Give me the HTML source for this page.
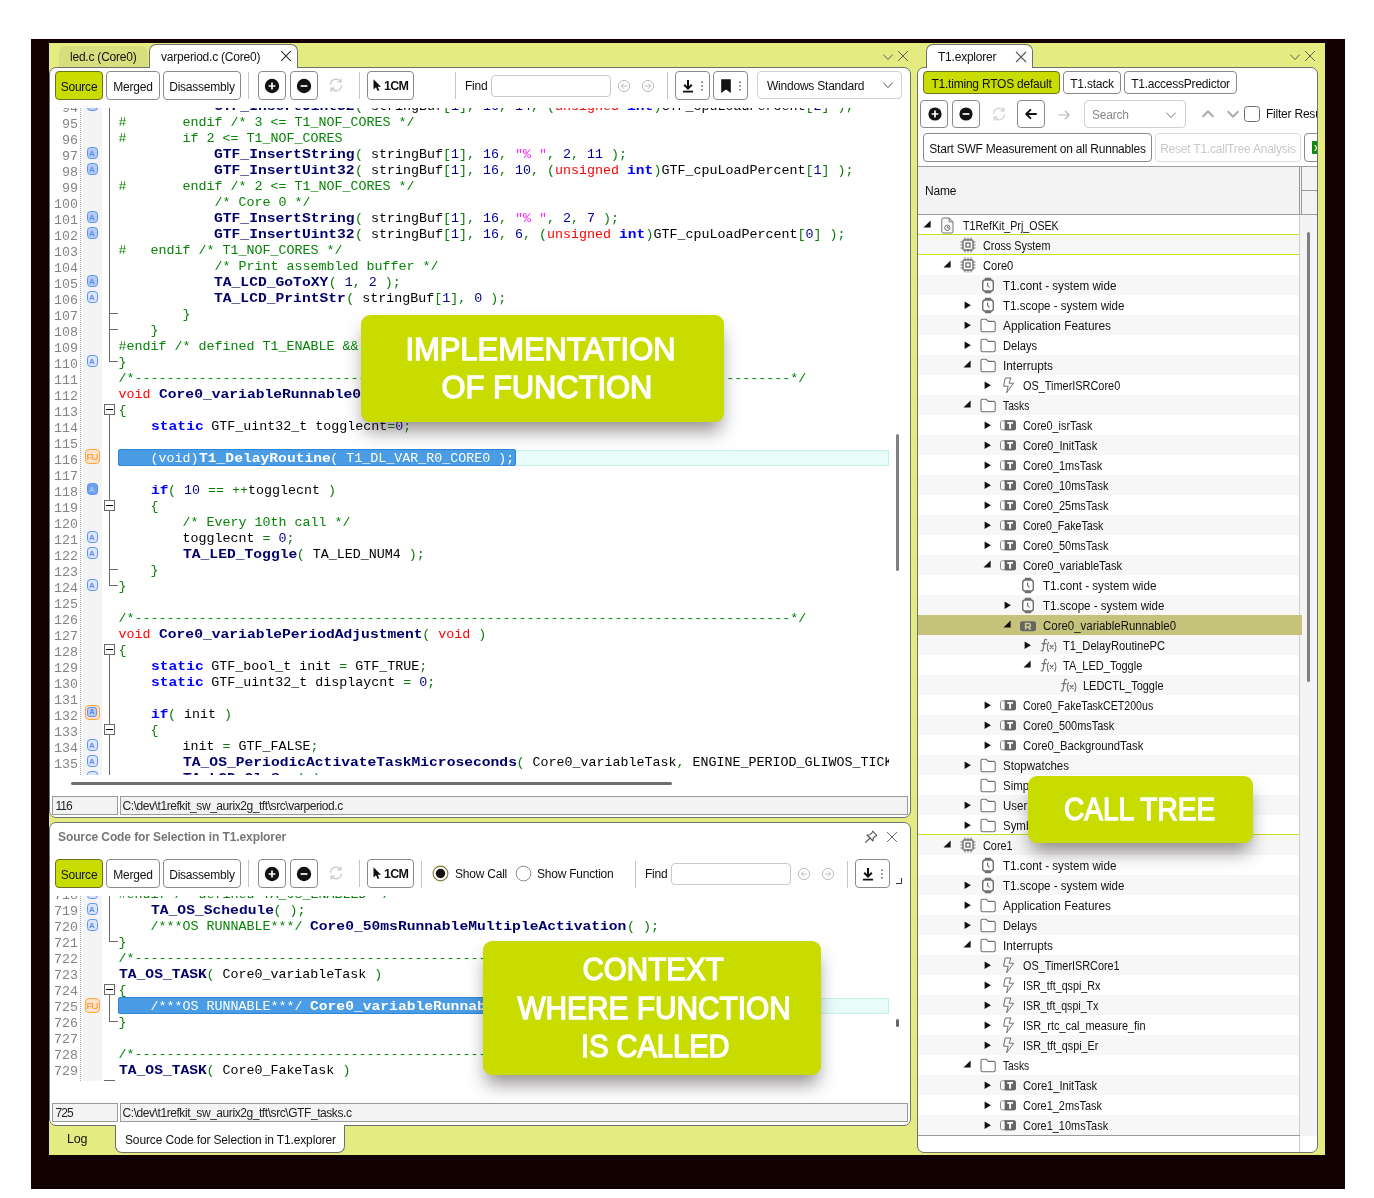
<!DOCTYPE html>
<html><head><meta charset="utf-8"><title>T1</title><style>
*{box-sizing:border-box;margin:0;padding:0}
html,body{width:1374px;height:1198px;background:#fff;overflow:hidden}
body{position:relative;font-family:"Liberation Sans",sans-serif;font-size:12px;color:#111;letter-spacing:-0.22px}
.abs{position:absolute}
#root{position:absolute;left:0;top:0;width:1374px;height:1198px;will-change:transform}
#frame{position:absolute;left:31px;top:39px;width:1314px;height:1150px;background:#130101}
#app{position:absolute;left:49px;top:43px;width:1276px;height:1112px;background:#e4eb80}
.panel{position:absolute;background:#fff;border:1px solid #707070;border-radius:7px;overflow:hidden}
.tab{position:absolute;white-space:nowrap;line-height:22px}
.tab.act{background:#fff;border:1px solid #707070;border-bottom:none;border-radius:7px 7px 0 0}
.tab.in{background:#d7de7e;border-radius:7px 7px 0 0}
.btn{position:absolute;border:1px solid #8a8a8a;border-radius:4px;background:#fff;white-space:nowrap;text-align:center;overflow:hidden;padding-top:2px}
.btn.on{background:#c8dc00;border-color:#6d7420}
.btn.dis{border-color:#dcdcdc;color:#c9c9c9}
.sep{position:absolute;width:1px;background:#c4c4c4}
.inp{position:absolute;border:1px solid #c9c9c9;border-radius:4px;background:#fff}
.lbl{position:absolute;white-space:nowrap}
.code{position:absolute;overflow:hidden;background:#fff;font-family:"Liberation Mono",monospace;font-size:13.333px;letter-spacing:0;line-height:16px}
.ln{position:absolute;left:0;width:28px;text-align:right;color:#848484;height:16px;white-space:pre;margin-top:2.5px}
.cl{position:absolute;left:68.5px;height:16px;white-space:pre;color:#000;margin-top:1px}
.b{display:inline-block;font-weight:bold;height:16px;vertical-align:top}
.b>span{display:inline-block;transform:scaleX(1.0987);transform-origin:0 50%}
.c{color:#068306}.o{color:#0a7a0a}.s{color:#ff20ff}.n{color:#000090}.k{color:#0000ff}.r{color:#ff0000}.f{color:#00006a}.i{color:#000}
.cl.sel,.cl.sel span{color:#fff}
.selbg{position:absolute;background:#4a9de4;border:1px solid #2e86d8;border-radius:2px}
.caret{position:absolute;background:#e8fdfa;border:1px solid #c4f1e6}
.mk{position:absolute;margin-top:-1px}
.st{position:absolute;border:1px solid #9a9a9a;background:#f3f3f3;font-size:12px;letter-spacing:-0.43px;line-height:19px;padding-left:1.5px;white-space:nowrap;overflow:hidden;color:#222}
.row{position:absolute;left:0;width:384px;height:20px}
.row.g{background:#f7f7f7}
.row.rsel{background:#c5c27c}
.row .t{position:absolute;top:0.5px;line-height:20px;white-space:nowrap;letter-spacing:0;transform-origin:0 50%}
.co{position:absolute;background:#c8dc00;border-radius:9px;color:#fff;text-align:center;font-size:31px;letter-spacing:0;box-shadow:0 12px 18px -3px rgba(50,40,40,0.5);white-space:nowrap;-webkit-text-stroke:1.3px #fff}
</style></head><body>
<div id="root"><div id="frame"></div><div id="app"></div>
<div class="tab in" style="left:59px;top:46px;width:89px;height:22px;"><span style="position:absolute;left:11px;top:0">led.c (Core0)</span></div>
<div class="panel" style="left:49px;top:67px;width:862px;height:751px;"></div>
<div class="tab act" style="left:149px;top:44px;width:149px;height:24px;"><span style="position:absolute;left:11px;top:1px">varperiod.c (Core0)</span></div>
<svg class="abs" style="left:278px;top:48px;" width="16" height="16" viewBox="0 0 16 16"><path d="M3.2 3.2L12.8 12.8M12.8 3.2L3.2 12.8" stroke="#2a2a2a" stroke-width="1.1" fill="none"/></svg>
<svg class="abs" style="left:879.5px;top:48.5px;" width="16" height="16" viewBox="0 0 16 16"><path d="M3.7 5.9L8 10.6L12.3 5.9" stroke="#5e5e5e" stroke-width="1.0" fill="none" stroke-linecap="round" stroke-linejoin="round"/></svg>
<svg class="abs" style="left:895px;top:47.8px;" width="16" height="16" viewBox="0 0 16 16"><path d="M3 3L13 13M13 3L3 13" stroke="#5e5e5e" stroke-width="1.0" fill="none"/></svg>
<div class="btn on" style="left:55px;top:71px;width:48px;height:29px;line-height:27px">Source</div>
<div class="btn" style="left:106px;top:71px;width:54px;height:29px;line-height:27px">Merged</div>
<div class="btn" style="left:163px;top:71px;width:78px;height:29px;line-height:27px">Disassembly</div>
<div class="sep" style="left:248px;top:72px;width:1px;height:27px;"></div>
<div class="btn" style="left:258px;top:71px;width:28px;height:29px;"></div>
<svg class="abs" style="left:264px;top:77.5px;" width="16" height="16" viewBox="0 0 16 16"><circle cx="8" cy="8" r="7.2" fill="#111"/><path d="M4.6 8H11.4M8 4.6V11.4" stroke="#fff" stroke-width="1.7" fill="none"/></svg>
<div class="btn" style="left:290px;top:71px;width:28px;height:29px;"></div>
<svg class="abs" style="left:296px;top:77.5px;" width="16" height="16" viewBox="0 0 16 16"><circle cx="8" cy="8" r="7.2" fill="#111"/><path d="M4.6 8H11.4" stroke="#fff" stroke-width="1.7" fill="none"/></svg>
<svg class="abs" style="left:328px;top:77.0px;" width="16" height="16" viewBox="0 0 16 16"><g fill="none" stroke="#c6c6c6" stroke-width="1.2" stroke-linecap="round" stroke-linejoin="round"><path d="M2.6 7.2A5.5 5.5 0 0 1 12.6 4.6"/><path d="M13.4 8.8A5.5 5.5 0 0 1 3.4 11.4"/><path d="M12.9 1.8V4.8H9.9"/><path d="M3.1 14.2V11.2H6.1"/></g></svg>
<div class="sep" style="left:359px;top:72px;width:1px;height:27px;"></div>
<div class="btn" style="left:367px;top:71px;width:47px;height:29px;"></div>
<svg class="abs" style="left:373px;top:78.5px;" width="9" height="13" viewBox="0 0 9 13"><path d="M0.5 0.3V10.6L3 8.3L4.7 12L6.3 11.3L4.7 7.7H8Z" fill="#111"/></svg>
<div class="lbl" style="left:384px;top:78px;line-height:16px;font-weight:bold;font-size:12.5px;letter-spacing:-0.8px">1CM</div>
<div class="sep" style="left:455px;top:72px;width:1px;height:27px;"></div>
<div class="lbl" style="left:465px;top:78px;line-height:16px;">Find</div>
<div class="inp" style="left:491px;top:75px;width:120px;height:22px;"></div>
<svg class="abs" style="left:616px;top:77.5px;" width="16" height="16" viewBox="0 0 16 16"><circle cx="8" cy="8" r="5.6" fill="none" stroke="#bdbdbd" stroke-width="1"/><path d="M10.8 8H5.4M7.6 5.6L5.2 8L7.6 10.4" fill="none" stroke="#bdbdbd" stroke-width="1" stroke-linecap="round" stroke-linejoin="round"/></svg>
<svg class="abs" style="left:640px;top:77.5px;" width="16" height="16" viewBox="0 0 16 16"><circle cx="8" cy="8" r="5.6" fill="none" stroke="#bdbdbd" stroke-width="1"/><path d="M5.2 8H10.6M8.4 5.6L10.8 8L8.4 10.4" fill="none" stroke="#bdbdbd" stroke-width="1" stroke-linecap="round" stroke-linejoin="round"/></svg>
<div class="sep" style="left:667px;top:72px;width:1px;height:27px;"></div>
<div class="btn" style="left:675px;top:71px;width:35px;height:29px;"></div>
<svg class="abs" style="left:680px;top:77.5px;" width="16" height="16" viewBox="0 0 16 16"><path d="M8 2V10.2M4.2 6.8L8 10.6L11.8 6.8" fill="none" stroke="#111" stroke-width="2"/><path d="M3 13.6H13" stroke="#111" stroke-width="1.8"/></svg>
<svg class="abs" style="left:699.5px;top:77.5px;" width="4" height="16" viewBox="0 0 4 16"><circle cx="2" cy="4.2" r="0.75" fill="#222"/><circle cx="2" cy="8" r="0.75" fill="#222"/><circle cx="2" cy="11.8" r="0.75" fill="#222"/></svg>
<div class="btn" style="left:713px;top:71px;width:35px;height:29px;"></div>
<svg class="abs" style="left:718px;top:77.5px;" width="16" height="16" viewBox="0 0 16 16"><path d="M3.2 1.2H12.8V15L8 11.6L3.2 15Z" fill="#111"/></svg>
<svg class="abs" style="left:737.5px;top:77.5px;" width="4" height="16" viewBox="0 0 4 16"><circle cx="2" cy="4.2" r="0.75" fill="#222"/><circle cx="2" cy="8" r="0.75" fill="#222"/><circle cx="2" cy="11.8" r="0.75" fill="#222"/></svg>
<div class="btn" style="left:757px;top:71px;width:145px;height:28px;border-color:#d0d0d0"><span style="position:absolute;left:9px;top:1px;line-height:26px">Windows Standard</span></div>
<svg class="abs" style="left:879.5px;top:77px;" width="16" height="16" viewBox="0 0 16 16"><path d="M3.7 5.9L8 10.6L12.3 5.9" stroke="#555" stroke-width="1.0" fill="none" stroke-linecap="round" stroke-linejoin="round"/></svg>
<div class="code" style="left:50px;top:108px;width:839px;height:667px"><div class="abs" style="left:33px;top:0;width:19px;height:667px;background:#f4f4f4"></div><div class="abs" style="left:30px;top:0;width:1px;height:667px;background:repeating-linear-gradient(to bottom,#a8a8a8 0 1px,#fff 1px 2px)"></div><div class="ln" style="top:-10px">94</div><div class="mk" style="left:37px;top:-8px;width:11px;height:12px;border:1.5px solid #5f92f0;border-radius:3.5px;background:#b3cbf3"><div style="position:absolute;left:0;top:0.8px;width:8px;height:9px;font:bold 8px/9.5px 'Liberation Sans',sans-serif;letter-spacing:0;color:#5b90ec;text-align:center">A</div></div><div class="abs" style="left:59px;top:-10px;width:1px;height:16px;background:#6a6a6a"></div><div class="cl" style="top:-10px">            <span class="b f" style="width:140.64px"><span>GTF_InsertUint32</span></span><span class="o">(</span> <span class="i">stringBuf</span><span class="o">[</span><span class="n">1</span><span class="o">],</span> <span class="n">16</span><span class="o">,</span> <span class="n">14</span><span class="o">,</span> <span class="o">(</span><span class="r">unsigned</span> <span class="b k" style="width:26.37px"><span>int</span></span><span class="o">)</span><span class="i">GTF_cpuLoadPercent</span><span class="o">[</span><span class="n">2</span><span class="o">]</span> <span class="o">);</span></div><div class="ln" style="top:6px">95</div><div class="abs" style="left:59px;top:6px;width:1px;height:16px;background:#6a6a6a"></div><div class="cl" style="top:6px"><span class="c">#       endif /* 3 &lt;= T1_NOF_CORES */</span></div><div class="ln" style="top:22px">96</div><div class="abs" style="left:59px;top:22px;width:1px;height:16px;background:#6a6a6a"></div><div class="cl" style="top:22px"><span class="c">#       if 2 &lt;= T1_NOF_CORES</span></div><div class="ln" style="top:38px">97</div><div class="mk" style="left:37px;top:40px;width:11px;height:12px;border:1.5px solid #5f92f0;border-radius:3.5px;background:#b3cbf3"><div style="position:absolute;left:0;top:0.8px;width:8px;height:9px;font:bold 8px/9.5px 'Liberation Sans',sans-serif;letter-spacing:0;color:#5b90ec;text-align:center">A</div></div><div class="abs" style="left:59px;top:38px;width:1px;height:16px;background:#6a6a6a"></div><div class="cl" style="top:38px">            <span class="b f" style="width:140.64px"><span>GTF_InsertString</span></span><span class="o">(</span> <span class="i">stringBuf</span><span class="o">[</span><span class="n">1</span><span class="o">],</span> <span class="n">16</span><span class="o">,</span> <span class="s">"% "</span><span class="o">,</span> <span class="n">2</span><span class="o">,</span> <span class="n">11</span> <span class="o">);</span></div><div class="ln" style="top:54px">98</div><div class="mk" style="left:37px;top:56px;width:11px;height:12px;border:1.5px solid #5f92f0;border-radius:3.5px;background:#b3cbf3"><div style="position:absolute;left:0;top:0.8px;width:8px;height:9px;font:bold 8px/9.5px 'Liberation Sans',sans-serif;letter-spacing:0;color:#5b90ec;text-align:center">A</div></div><div class="abs" style="left:59px;top:54px;width:1px;height:16px;background:#6a6a6a"></div><div class="cl" style="top:54px">            <span class="b f" style="width:140.64px"><span>GTF_InsertUint32</span></span><span class="o">(</span> <span class="i">stringBuf</span><span class="o">[</span><span class="n">1</span><span class="o">],</span> <span class="n">16</span><span class="o">,</span> <span class="n">10</span><span class="o">,</span> <span class="o">(</span><span class="r">unsigned</span> <span class="b k" style="width:26.37px"><span>int</span></span><span class="o">)</span><span class="i">GTF_cpuLoadPercent</span><span class="o">[</span><span class="n">1</span><span class="o">]</span> <span class="o">);</span></div><div class="ln" style="top:70px">99</div><div class="abs" style="left:59px;top:70px;width:1px;height:16px;background:#6a6a6a"></div><div class="cl" style="top:70px"><span class="c">#       endif /* 2 &lt;= T1_NOF_CORES */</span></div><div class="ln" style="top:86px">100</div><div class="abs" style="left:59px;top:86px;width:1px;height:16px;background:#6a6a6a"></div><div class="cl" style="top:86px">            <span class="c">/* Core 0 */</span></div><div class="ln" style="top:102px">101</div><div class="mk" style="left:37px;top:104px;width:11px;height:12px;border:1.5px solid #5f92f0;border-radius:3.5px;background:#b3cbf3"><div style="position:absolute;left:0;top:0.8px;width:8px;height:9px;font:bold 8px/9.5px 'Liberation Sans',sans-serif;letter-spacing:0;color:#5b90ec;text-align:center">A</div></div><div class="abs" style="left:59px;top:102px;width:1px;height:16px;background:#6a6a6a"></div><div class="cl" style="top:102px">            <span class="b f" style="width:140.64px"><span>GTF_InsertString</span></span><span class="o">(</span> <span class="i">stringBuf</span><span class="o">[</span><span class="n">1</span><span class="o">],</span> <span class="n">16</span><span class="o">,</span> <span class="s">"% "</span><span class="o">,</span> <span class="n">2</span><span class="o">,</span> <span class="n">7</span> <span class="o">);</span></div><div class="ln" style="top:118px">102</div><div class="mk" style="left:37px;top:120px;width:11px;height:12px;border:1.5px solid #5f92f0;border-radius:3.5px;background:#b3cbf3"><div style="position:absolute;left:0;top:0.8px;width:8px;height:9px;font:bold 8px/9.5px 'Liberation Sans',sans-serif;letter-spacing:0;color:#5b90ec;text-align:center">A</div></div><div class="abs" style="left:59px;top:118px;width:1px;height:16px;background:#6a6a6a"></div><div class="cl" style="top:118px">            <span class="b f" style="width:140.64px"><span>GTF_InsertUint32</span></span><span class="o">(</span> <span class="i">stringBuf</span><span class="o">[</span><span class="n">1</span><span class="o">],</span> <span class="n">16</span><span class="o">,</span> <span class="n">6</span><span class="o">,</span> <span class="o">(</span><span class="r">unsigned</span> <span class="b k" style="width:26.37px"><span>int</span></span><span class="o">)</span><span class="i">GTF_cpuLoadPercent</span><span class="o">[</span><span class="n">0</span><span class="o">]</span> <span class="o">);</span></div><div class="ln" style="top:134px">103</div><div class="abs" style="left:59px;top:134px;width:1px;height:16px;background:#6a6a6a"></div><div class="cl" style="top:134px"><span class="c">#   endif /* T1_NOF_CORES */</span></div><div class="ln" style="top:150px">104</div><div class="abs" style="left:59px;top:150px;width:1px;height:16px;background:#6a6a6a"></div><div class="cl" style="top:150px">            <span class="c">/* Print assembled buffer */</span></div><div class="ln" style="top:166px">105</div><div class="mk" style="left:37px;top:168px;width:11px;height:12px;border:1.5px solid #5f92f0;border-radius:3.5px;background:#b3cbf3"><div style="position:absolute;left:0;top:0.8px;width:8px;height:9px;font:bold 8px/9.5px 'Liberation Sans',sans-serif;letter-spacing:0;color:#5b90ec;text-align:center">A</div></div><div class="abs" style="left:59px;top:166px;width:1px;height:16px;background:#6a6a6a"></div><div class="cl" style="top:166px">            <span class="b f" style="width:114.27px"><span>TA_LCD_GoToXY</span></span><span class="o">(</span> <span class="n">1</span><span class="o">,</span> <span class="n">2</span> <span class="o">);</span></div><div class="ln" style="top:182px">106</div><div class="mk" style="left:37px;top:184px;width:11px;height:12px;border:1.5px solid #5f92f0;border-radius:3.5px;background:#dae5fa"><div style="position:absolute;left:0;top:0.8px;width:8px;height:9px;font:bold 8px/9.5px 'Liberation Sans',sans-serif;letter-spacing:0;color:#5b90ec;text-align:center">A</div></div><div class="abs" style="left:59px;top:182px;width:1px;height:16px;background:#6a6a6a"></div><div class="cl" style="top:182px">            <span class="b f" style="width:131.85px"><span>TA_LCD_PrintStr</span></span><span class="o">(</span> <span class="i">stringBuf</span><span class="o">[</span><span class="n">1</span><span class="o">],</span> <span class="n">0</span> <span class="o">);</span></div><div class="ln" style="top:198px">107</div><div class="abs" style="left:59px;top:198px;width:1px;height:16px;background:#6a6a6a"></div><div class="abs" style="left:59px;top:205px;width:9px;height:1px;background:#6a6a6a"></div><div class="cl" style="top:198px">        <span class="o">}</span></div><div class="ln" style="top:214px">108</div><div class="abs" style="left:59px;top:214px;width:1px;height:16px;background:#6a6a6a"></div><div class="abs" style="left:59px;top:221px;width:9px;height:1px;background:#6a6a6a"></div><div class="cl" style="top:214px">    <span class="o">}</span></div><div class="ln" style="top:230px">109</div><div class="abs" style="left:59px;top:230px;width:1px;height:16px;background:#6a6a6a"></div><div class="cl" style="top:230px"><span class="c">#endif /* defined T1_ENABLE &amp;&amp; !defined T1_DISABLE_T1_CONT */</span></div><div class="ln" style="top:246px">110</div><div class="mk" style="left:37px;top:248px;width:11px;height:12px;border:1.5px solid #5f92f0;border-radius:3.5px;background:#dae5fa"><div style="position:absolute;left:0;top:0.8px;width:8px;height:9px;font:bold 8px/9.5px 'Liberation Sans',sans-serif;letter-spacing:0;color:#5b90ec;text-align:center">A</div></div><div class="abs" style="left:59px;top:246px;width:1px;height:8px;background:#6a6a6a"></div><div class="abs" style="left:59px;top:253px;width:9px;height:1px;background:#6a6a6a"></div><div class="cl" style="top:246px"><span class="o">}</span></div><div class="ln" style="top:262px">111</div><div class="cl" style="top:262px"><span class="c">/*----------------------------------------------------------------------------------*/</span></div><div class="ln" style="top:278px">112</div><div class="cl" style="top:278px"><span class="r">void</span> <span class="b f" style="width:202.17px"><span>Core0_variableRunnable0</span></span><span class="o">(</span> <span class="r">void</span> <span class="o">)</span></div><div class="ln" style="top:294px">113</div><div class="abs" style="left:59px;top:307px;width:1px;height:3px;background:#6a6a6a"></div><div class="abs" style="left:54px;top:296px;width:11px;height:11px;border:1px solid #6a6a6a;background:#fff"><div class="abs" style="left:1px;top:3.75px;width:7px;height:1.5px;background:#000"></div></div><div class="cl" style="top:294px"><span class="o">{</span></div><div class="ln" style="top:310px">114</div><div class="abs" style="left:59px;top:310px;width:1px;height:16px;background:#6a6a6a"></div><div class="cl" style="top:310px">    <span class="b k" style="width:52.74px"><span>static</span></span> <span class="i">GTF_uint32_t</span> <span class="i">togglecnt</span><span class="o">=</span><span class="n">0</span><span class="o">;</span></div><div class="ln" style="top:326px">115</div><div class="abs" style="left:59px;top:326px;width:1px;height:16px;background:#6a6a6a"></div><div class="cl" style="top:326px"></div><div class="ln" style="top:342px">116</div><div class="mk" style="left:35px;top:342px;width:15px;height:15px;border:1.4px solid #ffa53c;border-radius:4px;background:#fbe3cb"><div style="position:absolute;left:-1px;top:1.2px;width:14px;height:12px;font:9.5px/12.5px 'Liberation Sans',sans-serif;letter-spacing:-0.9px;color:#ff8c1a;text-align:center">FU</div></div><div class="abs" style="left:59px;top:342px;width:1px;height:16px;background:#6a6a6a"></div><div class="caret" style="left:68px;top:342px;width:771px;height:16px"></div><div class="selbg" style="left:68px;top:341px;width:397.9px;height:17px"></div><div class="cl sel" style="top:342px">    <span class="o">(</span><span class="r">void</span><span class="o">)</span><span class="b f" style="width:131.85px"><span>T1_DelayRoutine</span></span><span class="o">(</span> <span class="i">T1_DL_VAR_R0_CORE0</span> <span class="o">);</span></div><div class="ln" style="top:358px">117</div><div class="abs" style="left:59px;top:358px;width:1px;height:16px;background:#6a6a6a"></div><div class="cl" style="top:358px"></div><div class="ln" style="top:374px">118</div><div class="mk" style="left:37px;top:376px;width:11px;height:12px;border:1.5px solid #5f92f0;border-radius:3.5px;background:#6f9ff0"><div style="position:absolute;left:0;top:0.8px;width:8px;height:9px;font:bold 8px/9.5px 'Liberation Sans',sans-serif;letter-spacing:0;color:#a9c5f6;text-align:center">A</div></div><div class="abs" style="left:59px;top:374px;width:1px;height:16px;background:#6a6a6a"></div><div class="cl" style="top:374px">    <span class="b k" style="width:17.58px"><span>if</span></span><span class="o">(</span> <span class="n">10</span> <span class="o">==</span> <span class="o">++</span><span class="i">togglecnt</span> <span class="o">)</span></div><div class="ln" style="top:390px">119</div><div class="abs" style="left:59px;top:390px;width:1px;height:2px;background:#6a6a6a"></div><div class="abs" style="left:59px;top:403px;width:1px;height:3px;background:#6a6a6a"></div><div class="abs" style="left:54px;top:392px;width:11px;height:11px;border:1px solid #6a6a6a;background:#fff"><div class="abs" style="left:1px;top:3.75px;width:7px;height:1.5px;background:#000"></div></div><div class="cl" style="top:390px">    <span class="o">{</span></div><div class="ln" style="top:406px">120</div><div class="abs" style="left:59px;top:406px;width:1px;height:16px;background:#6a6a6a"></div><div class="cl" style="top:406px">        <span class="c">/* Every 10th call */</span></div><div class="ln" style="top:422px">121</div><div class="mk" style="left:37px;top:424px;width:11px;height:12px;border:1.5px solid #5f92f0;border-radius:3.5px;background:#dae5fa"><div style="position:absolute;left:0;top:0.8px;width:8px;height:9px;font:bold 8px/9.5px 'Liberation Sans',sans-serif;letter-spacing:0;color:#5b90ec;text-align:center">A</div></div><div class="abs" style="left:59px;top:422px;width:1px;height:16px;background:#6a6a6a"></div><div class="cl" style="top:422px">        <span class="i">togglecnt</span> <span class="o">=</span> <span class="n">0</span><span class="o">;</span></div><div class="ln" style="top:438px">122</div><div class="mk" style="left:37px;top:440px;width:11px;height:12px;border:1.5px solid #5f92f0;border-radius:3.5px;background:#dae5fa"><div style="position:absolute;left:0;top:0.8px;width:8px;height:9px;font:bold 8px/9.5px 'Liberation Sans',sans-serif;letter-spacing:0;color:#5b90ec;text-align:center">A</div></div><div class="abs" style="left:59px;top:438px;width:1px;height:16px;background:#6a6a6a"></div><div class="cl" style="top:438px">        <span class="b f" style="width:114.27px"><span>TA_LED_Toggle</span></span><span class="o">(</span> <span class="i">TA_LED_NUM4</span> <span class="o">);</span></div><div class="ln" style="top:454px">123</div><div class="abs" style="left:59px;top:454px;width:1px;height:16px;background:#6a6a6a"></div><div class="abs" style="left:59px;top:461px;width:9px;height:1px;background:#6a6a6a"></div><div class="cl" style="top:454px">    <span class="o">}</span></div><div class="ln" style="top:470px">124</div><div class="mk" style="left:37px;top:472px;width:11px;height:12px;border:1.5px solid #5f92f0;border-radius:3.5px;background:#dae5fa"><div style="position:absolute;left:0;top:0.8px;width:8px;height:9px;font:bold 8px/9.5px 'Liberation Sans',sans-serif;letter-spacing:0;color:#5b90ec;text-align:center">A</div></div><div class="abs" style="left:59px;top:470px;width:1px;height:8px;background:#6a6a6a"></div><div class="abs" style="left:59px;top:477px;width:9px;height:1px;background:#6a6a6a"></div><div class="cl" style="top:470px"><span class="o">}</span></div><div class="ln" style="top:486px">125</div><div class="cl" style="top:486px"></div><div class="ln" style="top:502px">126</div><div class="cl" style="top:502px"><span class="c">/*----------------------------------------------------------------------------------*/</span></div><div class="ln" style="top:518px">127</div><div class="cl" style="top:518px"><span class="r">void</span> <span class="b f" style="width:263.70px"><span>Core0_variablePeriodAdjustment</span></span><span class="o">(</span> <span class="r">void</span> <span class="o">)</span></div><div class="ln" style="top:534px">128</div><div class="abs" style="left:59px;top:547px;width:1px;height:3px;background:#6a6a6a"></div><div class="abs" style="left:54px;top:536px;width:11px;height:11px;border:1px solid #6a6a6a;background:#fff"><div class="abs" style="left:1px;top:3.75px;width:7px;height:1.5px;background:#000"></div></div><div class="cl" style="top:534px"><span class="o">{</span></div><div class="ln" style="top:550px">129</div><div class="abs" style="left:59px;top:550px;width:1px;height:16px;background:#6a6a6a"></div><div class="cl" style="top:550px">    <span class="b k" style="width:52.74px"><span>static</span></span> <span class="i">GTF_bool_t</span> <span class="i">init</span> <span class="o">=</span> <span class="i">GTF_TRUE</span><span class="o">;</span></div><div class="ln" style="top:566px">130</div><div class="abs" style="left:59px;top:566px;width:1px;height:16px;background:#6a6a6a"></div><div class="cl" style="top:566px">    <span class="b k" style="width:52.74px"><span>static</span></span> <span class="i">GTF_uint32_t</span> <span class="i">displaycnt</span> <span class="o">=</span> <span class="n">0</span><span class="o">;</span></div><div class="ln" style="top:582px">131</div><div class="abs" style="left:59px;top:582px;width:1px;height:16px;background:#6a6a6a"></div><div class="cl" style="top:582px"></div><div class="ln" style="top:598px">132</div><div class="mk" style="left:35px;top:598px;width:15px;height:15px;border:1.4px solid #ffa53c;border-radius:4px;background:#fbe3cb"><div style="position:absolute;left:1px;top:1.2px;width:10px;height:10px;border:1.2px solid #6a96e8;border-radius:2.5px;background:#b4c8ee;font:bold 7px/8px 'Liberation Sans',sans-serif;letter-spacing:0;color:#5a88e0;text-align:center">A</div></div><div class="abs" style="left:59px;top:598px;width:1px;height:16px;background:#6a6a6a"></div><div class="cl" style="top:598px">    <span class="b k" style="width:17.58px"><span>if</span></span><span class="o">(</span> <span class="i">init</span> <span class="o">)</span></div><div class="ln" style="top:614px">133</div><div class="abs" style="left:59px;top:614px;width:1px;height:2px;background:#6a6a6a"></div><div class="abs" style="left:59px;top:627px;width:1px;height:3px;background:#6a6a6a"></div><div class="abs" style="left:54px;top:616px;width:11px;height:11px;border:1px solid #6a6a6a;background:#fff"><div class="abs" style="left:1px;top:3.75px;width:7px;height:1.5px;background:#000"></div></div><div class="cl" style="top:614px">    <span class="o">{</span></div><div class="ln" style="top:630px">134</div><div class="mk" style="left:37px;top:632px;width:11px;height:12px;border:1.5px solid #5f92f0;border-radius:3.5px;background:#dae5fa"><div style="position:absolute;left:0;top:0.8px;width:8px;height:9px;font:bold 8px/9.5px 'Liberation Sans',sans-serif;letter-spacing:0;color:#5b90ec;text-align:center">A</div></div><div class="abs" style="left:59px;top:630px;width:1px;height:16px;background:#6a6a6a"></div><div class="cl" style="top:630px">        <span class="i">init</span> <span class="o">=</span> <span class="i">GTF_FALSE</span><span class="o">;</span></div><div class="ln" style="top:646px">135</div><div class="mk" style="left:37px;top:648px;width:11px;height:12px;border:1.5px solid #5f92f0;border-radius:3.5px;background:#dae5fa"><div style="position:absolute;left:0;top:0.8px;width:8px;height:9px;font:bold 8px/9.5px 'Liberation Sans',sans-serif;letter-spacing:0;color:#5b90ec;text-align:center">A</div></div><div class="abs" style="left:59px;top:646px;width:1px;height:16px;background:#6a6a6a"></div><div class="cl" style="top:646px">        <span class="b f" style="width:334.02px"><span>TA_OS_PeriodicActivateTaskMicroseconds</span></span><span class="o">(</span> <span class="i">Core0_variableTask</span><span class="o">,</span> <span class="i">ENGINE_PERIOD_GLIWOS_TICKS</span> <span class="o">);</span></div><div class="ln" style="top:662px">136</div><div class="mk" style="left:37px;top:664px;width:11px;height:12px;border:1.5px solid #5f92f0;border-radius:3.5px;background:#dae5fa"><div style="position:absolute;left:0;top:0.8px;width:8px;height:9px;font:bold 8px/9.5px 'Liberation Sans',sans-serif;letter-spacing:0;color:#5b90ec;text-align:center">A</div></div><div class="abs" style="left:59px;top:662px;width:1px;height:16px;background:#6a6a6a"></div><div class="cl" style="top:662px">        <span class="b f" style="width:114.27px"><span>TA_LCD_ClrScr</span></span><span class="o">(</span> <span class="o">);</span></div></div>
<div class="abs" style="left:896px;top:434px;width:3px;height:137px;background:#808080;border-radius:1.5px"></div>
<div class="abs" style="left:71px;top:782px;width:601px;height:3px;background:#6e6e6e;border-radius:1.5px"></div>
<div class="st" style="left:52px;top:796px;width:66px;height:19px;letter-spacing:-0.95px;padding-left:2.5px">116</div>
<div class="st" style="left:120px;top:796px;width:788px;height:19px;">C:\dev\t1refkit_sw_aurix2g_tft\src\varperiod.c</div>
<div class="panel" style="left:49px;top:822px;width:862px;height:304px;"></div>
<div class="lbl" style="left:58px;top:829px;line-height:16px;font-weight:bold;color:#767676;font-size:12px;letter-spacing:-0.1px">Source Code for Selection in T1.explorer</div>
<svg class="abs" style="left:862.5px;top:829px;" width="16" height="16" viewBox="0 0 16 16"><g fill="none" stroke="#555" stroke-width="1.1" stroke-linejoin="round" stroke-linecap="round"><path d="M9.6 2.2L13.8 6.4L12.4 6.9L10.3 9L10 12L4 6L7 5.7L9.1 3.6Z"/><path d="M7 9L2.6 13.4"/></g></svg>
<svg class="abs" style="left:884px;top:829px;" width="16" height="16" viewBox="0 0 16 16"><path d="M3 3L13 13M13 3L3 13" stroke="#6a6a6a" stroke-width="1.0" fill="none"/></svg>
<div class="btn on" style="left:55px;top:859px;width:48px;height:29px;line-height:27px">Source</div>
<div class="btn" style="left:106px;top:859px;width:54px;height:29px;line-height:27px">Merged</div>
<div class="btn" style="left:163px;top:859px;width:78px;height:29px;line-height:27px">Disassembly</div>
<div class="sep" style="left:248px;top:860px;width:1px;height:27px;"></div>
<div class="btn" style="left:258px;top:859px;width:28px;height:29px;"></div>
<svg class="abs" style="left:264px;top:865.5px;" width="16" height="16" viewBox="0 0 16 16"><circle cx="8" cy="8" r="7.2" fill="#111"/><path d="M4.6 8H11.4M8 4.6V11.4" stroke="#fff" stroke-width="1.7" fill="none"/></svg>
<div class="btn" style="left:290px;top:859px;width:28px;height:29px;"></div>
<svg class="abs" style="left:296px;top:865.5px;" width="16" height="16" viewBox="0 0 16 16"><circle cx="8" cy="8" r="7.2" fill="#111"/><path d="M4.6 8H11.4" stroke="#fff" stroke-width="1.7" fill="none"/></svg>
<svg class="abs" style="left:328px;top:865.0px;" width="16" height="16" viewBox="0 0 16 16"><g fill="none" stroke="#c6c6c6" stroke-width="1.2" stroke-linecap="round" stroke-linejoin="round"><path d="M2.6 7.2A5.5 5.5 0 0 1 12.6 4.6"/><path d="M13.4 8.8A5.5 5.5 0 0 1 3.4 11.4"/><path d="M12.9 1.8V4.8H9.9"/><path d="M3.1 14.2V11.2H6.1"/></g></svg>
<div class="sep" style="left:359px;top:860px;width:1px;height:27px;"></div>
<div class="btn" style="left:367px;top:859px;width:47px;height:29px;"></div>
<svg class="abs" style="left:373px;top:866.5px;" width="9" height="13" viewBox="0 0 9 13"><path d="M0.5 0.3V10.6L3 8.3L4.7 12L6.3 11.3L4.7 7.7H8Z" fill="#111"/></svg>
<div class="lbl" style="left:384px;top:866px;line-height:16px;font-weight:bold;font-size:12.5px;letter-spacing:-0.8px">1CM</div>
<div class="sep" style="left:421px;top:861px;width:1px;height:27px;"></div>
<svg class="abs" style="left:432px;top:865px;" width="17" height="17" viewBox="0 0 17 17"><circle cx="8.5" cy="8.5" r="7.4" fill="#fff" stroke="#7d7a38" stroke-width="1.1"/><circle cx="8.5" cy="8.5" r="4.7" fill="#111"/></svg>
<div class="lbl" style="left:455px;top:866px;line-height:16px;">Show Call</div>
<svg class="abs" style="left:514.5px;top:865px;" width="17" height="17" viewBox="0 0 17 17"><circle cx="8.5" cy="8.5" r="7.4" fill="#fff" stroke="#8a8a8a" stroke-width="1"/></svg>
<div class="lbl" style="left:537px;top:866px;line-height:16px;">Show Function</div>
<div class="sep" style="left:635px;top:861px;width:1px;height:27px;"></div>
<div class="lbl" style="left:645px;top:866px;line-height:16px;">Find</div>
<div class="inp" style="left:671px;top:863px;width:120px;height:22px;"></div>
<svg class="abs" style="left:796px;top:865.5px;" width="16" height="16" viewBox="0 0 16 16"><circle cx="8" cy="8" r="5.6" fill="none" stroke="#bdbdbd" stroke-width="1"/><path d="M10.8 8H5.4M7.6 5.6L5.2 8L7.6 10.4" fill="none" stroke="#bdbdbd" stroke-width="1" stroke-linecap="round" stroke-linejoin="round"/></svg>
<svg class="abs" style="left:820px;top:865.5px;" width="16" height="16" viewBox="0 0 16 16"><circle cx="8" cy="8" r="5.6" fill="none" stroke="#bdbdbd" stroke-width="1"/><path d="M5.2 8H10.6M8.4 5.6L10.8 8L8.4 10.4" fill="none" stroke="#bdbdbd" stroke-width="1" stroke-linecap="round" stroke-linejoin="round"/></svg>
<div class="sep" style="left:847px;top:861px;width:1px;height:27px;"></div>
<div class="btn" style="left:855px;top:859px;width:35px;height:29px;"></div>
<svg class="abs" style="left:860px;top:865.5px;" width="16" height="16" viewBox="0 0 16 16"><path d="M8 2V10.2M4.2 6.8L8 10.6L11.8 6.8" fill="none" stroke="#111" stroke-width="2"/><path d="M3 13.6H13" stroke="#111" stroke-width="1.8"/></svg>
<svg class="abs" style="left:879.5px;top:865.5px;" width="4" height="16" viewBox="0 0 4 16"><circle cx="2" cy="4.2" r="0.75" fill="#222"/><circle cx="2" cy="8" r="0.75" fill="#222"/><circle cx="2" cy="11.8" r="0.75" fill="#222"/></svg>
<svg class="abs" style="left:895px;top:877px;" width="8" height="8" viewBox="0 0 8 8"><path d="M6.5 1V6.5H1" fill="none" stroke="#333" stroke-width="1"/></svg>
<div class="code" style="left:50px;top:896px;width:839px;height:185px"><div class="abs" style="left:33px;top:0;width:19px;height:185px;background:#f4f4f4"></div><div class="abs" style="left:30px;top:0;width:1px;height:185px;background:repeating-linear-gradient(to bottom,#a8a8a8 0 1px,#fff 1px 2px)"></div><div class="ln" style="top:-11px">718</div><div class="mk" style="left:37px;top:-8px;width:11px;height:12px;border:1.5px solid #5f92f0;border-radius:3.5px;background:#dae5fa"><div style="position:absolute;left:0;top:0.8px;width:8px;height:9px;font:bold 8px/9.5px 'Liberation Sans',sans-serif;letter-spacing:0;color:#5b90ec;text-align:center">A</div></div><div class="abs" style="left:59px;top:-10px;width:1px;height:16px;background:#6a6a6a"></div><div class="cl" style="top:-10px"><span class="c">#endif /* defined TA_OS_ENABLED */</span></div><div class="ln" style="top:5px">719</div><div class="mk" style="left:37px;top:8px;width:11px;height:12px;border:1.5px solid #5f92f0;border-radius:3.5px;background:#dae5fa"><div style="position:absolute;left:0;top:0.8px;width:8px;height:9px;font:bold 8px/9.5px 'Liberation Sans',sans-serif;letter-spacing:0;color:#5b90ec;text-align:center">A</div></div><div class="abs" style="left:59px;top:6px;width:1px;height:16px;background:#6a6a6a"></div><div class="cl" style="top:6px">    <span class="b f" style="width:123.06px"><span>TA_OS_Schedule</span></span><span class="o">(</span> <span class="o">);</span></div><div class="ln" style="top:21px">720</div><div class="mk" style="left:37px;top:24px;width:11px;height:12px;border:1.5px solid #5f92f0;border-radius:3.5px;background:#dae5fa"><div style="position:absolute;left:0;top:0.8px;width:8px;height:9px;font:bold 8px/9.5px 'Liberation Sans',sans-serif;letter-spacing:0;color:#5b90ec;text-align:center">A</div></div><div class="abs" style="left:59px;top:22px;width:1px;height:16px;background:#6a6a6a"></div><div class="cl" style="top:22px">    <span class="c">/***OS RUNNABLE***/</span> <span class="b f" style="width:316.44px"><span>Core0_50msRunnableMultipleActivation</span></span><span class="o">(</span> <span class="o">);</span></div><div class="ln" style="top:37px">721</div><div class="abs" style="left:59px;top:38px;width:1px;height:8px;background:#6a6a6a"></div><div class="abs" style="left:59px;top:45px;width:9px;height:1px;background:#6a6a6a"></div><div class="cl" style="top:38px"><span class="o">}</span></div><div class="ln" style="top:53px">722</div><div class="cl" style="top:54px"><span class="c">/*----------------------------------------------------------------------------------*/</span></div><div class="ln" style="top:69px">723</div><div class="cl" style="top:70px"><span class="b f" style="width:87.90px"><span>TA_OS_TASK</span></span><span class="o">(</span> <span class="i">Core0_variableTask</span> <span class="o">)</span></div><div class="ln" style="top:85px">724</div><div class="abs" style="left:59px;top:99px;width:1px;height:3px;background:#6a6a6a"></div><div class="abs" style="left:54px;top:88px;width:11px;height:11px;border:1px solid #6a6a6a;background:#fff"><div class="abs" style="left:1px;top:3.75px;width:7px;height:1.5px;background:#000"></div></div><div class="cl" style="top:86px"><span class="o">{</span></div><div class="ln" style="top:101px">725</div><div class="mk" style="left:35px;top:103px;width:15px;height:15px;border:1.4px solid #ffa53c;border-radius:4px;background:#fbe3cb"><div style="position:absolute;left:-1px;top:1.2px;width:14px;height:12px;font:9.5px/12.5px 'Liberation Sans',sans-serif;letter-spacing:-0.9px;color:#ff8c1a;text-align:center">FU</div></div><div class="abs" style="left:59px;top:102px;width:1px;height:16px;background:#6a6a6a"></div><div class="caret" style="left:68px;top:102px;width:771px;height:16px"></div><div class="selbg" style="left:68px;top:101px;width:428.2px;height:17px"></div><div class="cl sel" style="top:102px">    <span class="c">/***OS RUNNABLE***/</span> <span class="b f" style="width:202.17px"><span>Core0_variableRunnable0</span></span><span class="o">(</span> <span class="o">);</span></div><div class="ln" style="top:117px">726</div><div class="abs" style="left:59px;top:118px;width:1px;height:8px;background:#6a6a6a"></div><div class="abs" style="left:59px;top:125px;width:9px;height:1px;background:#6a6a6a"></div><div class="cl" style="top:118px"><span class="o">}</span></div><div class="ln" style="top:133px">727</div><div class="cl" style="top:134px"></div><div class="ln" style="top:149px">728</div><div class="cl" style="top:150px"><span class="c">/*----------------------------------------------------------------------------------*/</span></div><div class="ln" style="top:165px">729</div><div class="cl" style="top:166px"><span class="b f" style="width:87.90px"><span>TA_OS_TASK</span></span><span class="o">(</span> <span class="i">Core0_FakeTask</span> <span class="o">)</span></div><div class="ln" style="top:181px">730</div><div class="abs" style="left:59px;top:195px;width:1px;height:3px;background:#6a6a6a"></div><div class="abs" style="left:54px;top:184px;width:11px;height:11px;border:1px solid #6a6a6a;background:#fff"><div class="abs" style="left:1px;top:3.75px;width:7px;height:1.5px;background:#000"></div></div><div class="cl" style="top:182px"><span class="o">{</span></div></div>
<div class="abs" style="left:896px;top:1019px;width:3px;height:8px;background:#666;border-radius:1.5px"></div>
<div class="st" style="left:52px;top:1103px;width:66px;height:19px;letter-spacing:-0.95px;padding-left:2.5px">725</div>
<div class="st" style="left:120px;top:1103px;width:788px;height:19px;">C:\dev\t1refkit_sw_aurix2g_tft\src\GTF_tasks.c</div>
<div class="lbl" style="left:67px;top:1131px;line-height:16px;font-size:12.5px">Log</div>
<div class="abs" style="left:115px;top:1125px;width:230px;height:28px;background:#fff;border:1px solid #707070;border-top:none;border-radius:0 0 7px 7px"></div>
<div class="lbl" style="left:125px;top:1132px;line-height:16px;letter-spacing:-0.14px">Source Code for Selection in T1.explorer</div>
<div class="panel" style="left:917px;top:67px;width:401px;height:1086px;"></div>
<div class="tab act" style="left:926px;top:44px;width:107px;height:24px;"><span style="position:absolute;left:11px;top:1px">T1.explorer</span></div>
<svg class="abs" style="left:1013px;top:48.5px;" width="16" height="16" viewBox="0 0 16 16"><path d="M3 3L13 13M13 3L3 13" stroke="#555" stroke-width="1.1" fill="none"/></svg>
<svg class="abs" style="left:1286.5px;top:48.5px;" width="16" height="16" viewBox="0 0 16 16"><path d="M3.7 5.9L8 10.6L12.3 5.9" stroke="#5e5e5e" stroke-width="1.0" fill="none" stroke-linecap="round" stroke-linejoin="round"/></svg>
<svg class="abs" style="left:1302px;top:47.8px;" width="16" height="16" viewBox="0 0 16 16"><path d="M3 3L13 13M13 3L3 13" stroke="#5e5e5e" stroke-width="1.0" fill="none"/></svg>
<div class="abs" style="left:918px;top:68px;width:399px;height:98px;overflow:hidden"><div class="btn on" style="left:5px;top:3px;width:137px;height:23px;line-height:21px">T1.timing RTOS default</div><div class="btn" style="left:145px;top:3px;width:58px;height:23px;line-height:21px">T1.stack</div><div class="btn" style="left:206px;top:3px;width:113px;height:23px;line-height:21px">T1.accessPredictor</div><div class="btn" style="left:2px;top:32px;width:28px;height:28px;"></div><div class="btn" style="left:34px;top:32px;width:28px;height:28px;"></div><div class="btn" style="left:99px;top:32px;width:28px;height:28px;"></div><div class="btn" style="left:166px;top:32px;width:102px;height:28px;border-color:#d0d0d0"><span style="position:absolute;left:7px;top:0.5px;line-height:26px;color:#8a8a8a">Search</span></div><div class="btn" style="left:326px;top:38px;width:16px;height:16px;border-color:#6f6f6f;border-radius:3.5px"></div><div class="lbl" style="left:348px;top:38px;width:60px;height:16px;line-height:16px">Filter Results</div><div class="btn" style="left:5px;top:65px;width:229px;height:29px;line-height:27px">Start SWF Measurement on all Runnables</div><div class="btn dis" style="left:237px;top:65px;width:146px;height:29px;line-height:27px">Reset T1.callTree Analysis</div><div class="btn" style="left:386px;top:65px;width:40px;height:29px;"><div class="abs" style="left:7px;top:7px;width:14px;height:13px;background:#0b8a0b;border-radius:1px"></div><div class="abs" style="left:9px;top:7px;color:#dfeedd;font:bold 10px/13px 'Liberation Sans'">x</div></div></div>
<svg class="abs" style="left:926.5px;top:106px;" width="16" height="16" viewBox="0 0 16 16"><circle cx="8" cy="8" r="6.6" fill="#111"/><path d="M4.6 8H11.4M8 4.6V11.4" stroke="#fff" stroke-width="1.7" fill="none"/></svg>
<svg class="abs" style="left:958px;top:106px;" width="16" height="16" viewBox="0 0 16 16"><circle cx="8" cy="8" r="6.6" fill="#111"/><path d="M4.6 8H11.4" stroke="#fff" stroke-width="1.7" fill="none"/></svg>
<svg class="abs" style="left:990.5px;top:106px;" width="16" height="16" viewBox="0 0 16 16"><g fill="none" stroke="#cfcfcf" stroke-width="1.2" stroke-linecap="round" stroke-linejoin="round"><path d="M2.6 7.2A5.5 5.5 0 0 1 12.6 4.6"/><path d="M13.4 8.8A5.5 5.5 0 0 1 3.4 11.4"/><path d="M12.9 1.8V4.8H9.9"/><path d="M3.1 14.2V11.2H6.1"/></g></svg>
<svg class="abs" style="left:1023px;top:106px;" width="16" height="16" viewBox="0 0 16 16"><path d="M13 8H3.4M7.4 3.8L3.2 8L7.4 12.2" fill="none" stroke="#111" stroke-width="1.9" stroke-linecap="round" stroke-linejoin="round"/></svg>
<svg class="abs" style="left:1056px;top:106.5px;" width="16" height="16" viewBox="0 0 16 16"><path d="M2.6 8H13M9.2 4L13.2 8L9.2 12" fill="none" stroke="#b8b8b8" stroke-width="1.1" stroke-linecap="round" stroke-linejoin="round"/></svg>
<svg class="abs" style="left:1162.5px;top:106.5px;" width="16" height="16" viewBox="0 0 16 16"><path d="M3.7 5.9L8 10.6L12.3 5.9" stroke="#777" stroke-width="1.0" fill="none" stroke-linecap="round" stroke-linejoin="round"/></svg>
<svg class="abs" style="left:1199.7px;top:106px;" width="16" height="16" viewBox="0 0 16 16"><path d="M3.2 10.3L8 5.2L12.8 10.3" stroke="#adadad" stroke-width="2.0" fill="none" stroke-linecap="round" stroke-linejoin="round"/></svg>
<svg class="abs" style="left:1225.4px;top:106px;" width="16" height="16" viewBox="0 0 16 16"><path d="M3.2 5.7L8 10.8L12.8 5.7" stroke="#adadad" stroke-width="2.0" fill="none" stroke-linecap="round" stroke-linejoin="round"/></svg>
<div class="abs" style="left:918px;top:166px;width:399px;height:49px;background:#f3f3f3;border-top:1px solid #9c9c9c;border-bottom:1px solid #9c9c9c"></div>
<div class="lbl" style="left:925px;top:183px;line-height:16px;">Name</div>
<div class="abs" style="left:1299px;top:167px;width:1px;height:47px;background:#9a9a9a"></div>
<div class="abs" style="left:1301px;top:167px;width:1px;height:47px;background:#9a9a9a"></div>
<div class="abs" style="left:1302px;top:190px;width:15px;height:1px;background:#9a9a9a"></div>
<div class="abs" style="left:918px;top:215px;width:383px;height:920px;overflow:hidden;background:#fff"><div class="row" style="top:0px"><svg class="abs" style="left:5px;top:5px;" width="8" height="8" viewBox="0 0 8 8"><path d="M7.6 0.5V7.6H0.5Z" fill="#111"/></svg><svg class="abs" style="left:23.2px;top:1.5px;" width="13" height="17" viewBox="0 0 13 17"><g fill="none" stroke="#6f6f6f" stroke-width="1"><path d="M0.8 2.5A1.5 1.5 0 0 1 2.3 1H8.2L12 4.8V14.5A1.5 1.5 0 0 1 10.5 16H2.3A1.5 1.5 0 0 1 0.8 14.5Z"/><path d="M8.2 1V4.8H12"/><circle cx="6.4" cy="10.8" r="2.7"/><path d="M6.4 9V10.8H8.3"/></g></svg><span class="t" style="left:45px;transform:scaleX(0.8858)">T1RefKit_Prj_OSEK</span></div><div class="row g" style="top:20px"><svg class="abs" style="left:42px;top:2px;" width="16" height="16" viewBox="0 0 16 16"><g fill="none" stroke="#6f6f6f" stroke-width="1.1"><rect x="3" y="3" width="10" height="10" rx="1.6" stroke-width="1.4"/><rect x="6" y="6" width="4" height="4" stroke-width="1.3"/><path d="M5 0.5V3M5 13V15.5M0.5 5H3M13 5H15.5"/><path d="M8 0.5V3M8 13V15.5M0.5 8H3M13 8H15.5"/><path d="M11 0.5V3M11 13V15.5M0.5 11H3M13 11H15.5"/></g></svg><span class="t" style="left:65px;transform:scaleX(0.9025)">Cross System</span></div><div class="row" style="top:40px"><svg class="abs" style="left:25px;top:5px;" width="8" height="8" viewBox="0 0 8 8"><path d="M7.6 0.5V7.6H0.5Z" fill="#111"/></svg><svg class="abs" style="left:42px;top:2px;" width="16" height="16" viewBox="0 0 16 16"><g fill="none" stroke="#6f6f6f" stroke-width="1.1"><rect x="3" y="3" width="10" height="10" rx="1.6" stroke-width="1.4"/><rect x="6" y="6" width="4" height="4" stroke-width="1.3"/><path d="M5 0.5V3M5 13V15.5M0.5 5H3M13 5H15.5"/><path d="M8 0.5V3M8 13V15.5M0.5 8H3M13 8H15.5"/><path d="M11 0.5V3M11 13V15.5M0.5 11H3M13 11H15.5"/></g></svg><span class="t" style="left:65px;transform:scaleX(0.9271)">Core0</span></div><div class="row g" style="top:60px"><svg class="abs" style="left:63px;top:1.5px;" width="14" height="17" viewBox="0 0 14 17"><path d="M4 0.8H10L10.8 3.4H3.2Z" fill="#6f6f6f"/><path d="M4 16.2H10L10.8 13.6H3.2Z" fill="#6f6f6f"/><rect x="1.7" y="3" width="10.6" height="11" rx="2.6" fill="#fff" stroke="#6f6f6f" stroke-width="1.4"/><path d="M6.6 5.8V8.6L8.6 10.4" fill="none" stroke="#6f6f6f" stroke-width="1.2"/></svg><span class="t" style="left:85px;transform:scaleX(0.9717)">T1.cont - system wide</span></div><div class="row" style="top:80px"><svg class="abs" style="left:46px;top:5.5px;" width="8" height="9" viewBox="0 0 8 9"><path d="M0.6 0.4L6.9 4.2L0.6 8Z" fill="#111"/></svg><svg class="abs" style="left:63px;top:1.5px;" width="14" height="17" viewBox="0 0 14 17"><path d="M4 0.8H10L10.8 3.4H3.2Z" fill="#6f6f6f"/><path d="M4 16.2H10L10.8 13.6H3.2Z" fill="#6f6f6f"/><rect x="1.7" y="3" width="10.6" height="11" rx="2.6" fill="#fff" stroke="#6f6f6f" stroke-width="1.4"/><path d="M6.6 5.8V8.6L8.6 10.4" fill="none" stroke="#6f6f6f" stroke-width="1.2"/></svg><span class="t" style="left:85px;transform:scaleX(0.9632)">T1.scope - system wide</span></div><div class="row g" style="top:100px"><svg class="abs" style="left:46px;top:5.5px;" width="8" height="9" viewBox="0 0 8 9"><path d="M0.6 0.4L6.9 4.2L0.6 8Z" fill="#111"/></svg><svg class="abs" style="left:62px;top:2.5px;" width="16" height="15" viewBox="0 0 16 15"><path d="M1 3A1.6 1.6 0 0 1 2.6 1.2H6.2L8.2 3.4H13.6A1.6 1.6 0 0 1 15.2 5V12.2A1.6 1.6 0 0 1 13.6 13.8H2.6A1.6 1.6 0 0 1 1 12.2Z" fill="#fff" stroke="#6f6f6f" stroke-width="1.1"/></svg><span class="t" style="left:85px;transform:scaleX(0.9864)">Application Features</span></div><div class="row" style="top:120px"><svg class="abs" style="left:46px;top:5.5px;" width="8" height="9" viewBox="0 0 8 9"><path d="M0.6 0.4L6.9 4.2L0.6 8Z" fill="#111"/></svg><svg class="abs" style="left:62px;top:2.5px;" width="16" height="15" viewBox="0 0 16 15"><path d="M1 3A1.6 1.6 0 0 1 2.6 1.2H6.2L8.2 3.4H13.6A1.6 1.6 0 0 1 15.2 5V12.2A1.6 1.6 0 0 1 13.6 13.8H2.6A1.6 1.6 0 0 1 1 12.2Z" fill="#fff" stroke="#6f6f6f" stroke-width="1.1"/></svg><span class="t" style="left:85px;transform:scaleX(0.9270)">Delays</span></div><div class="row g" style="top:140px"><svg class="abs" style="left:45px;top:5px;" width="8" height="8" viewBox="0 0 8 8"><path d="M7.6 0.5V7.6H0.5Z" fill="#111"/></svg><svg class="abs" style="left:62px;top:2.5px;" width="16" height="15" viewBox="0 0 16 15"><path d="M1 3A1.6 1.6 0 0 1 2.6 1.2H6.2L8.2 3.4H13.6A1.6 1.6 0 0 1 15.2 5V12.2A1.6 1.6 0 0 1 13.6 13.8H2.6A1.6 1.6 0 0 1 1 12.2Z" fill="#fff" stroke="#6f6f6f" stroke-width="1.1"/></svg><span class="t" style="left:85px;transform:scaleX(0.9864)">Interrupts</span></div><div class="row" style="top:160px"><svg class="abs" style="left:66px;top:5.5px;" width="8" height="9" viewBox="0 0 8 9"><path d="M0.6 0.4L6.9 4.2L0.6 8Z" fill="#111"/></svg><svg class="abs" style="left:83px;top:2px;" width="14" height="17" viewBox="0 0 14 17"><path d="M4.2 1H10L8 6.2H12.6L5.6 15.8L7.2 9.2H2.6Z" fill="#fff" fill-opacity="0.4" stroke="#6f6f6f" stroke-width="1" stroke-linejoin="round"/></svg><span class="t" style="left:105px;transform:scaleX(0.9091)">OS_TimerISRCore0</span></div><div class="row g" style="top:180px"><svg class="abs" style="left:45px;top:5px;" width="8" height="8" viewBox="0 0 8 8"><path d="M7.6 0.5V7.6H0.5Z" fill="#111"/></svg><svg class="abs" style="left:62px;top:2.5px;" width="16" height="15" viewBox="0 0 16 15"><path d="M1 3A1.6 1.6 0 0 1 2.6 1.2H6.2L8.2 3.4H13.6A1.6 1.6 0 0 1 15.2 5V12.2A1.6 1.6 0 0 1 13.6 13.8H2.6A1.6 1.6 0 0 1 1 12.2Z" fill="#fff" stroke="#6f6f6f" stroke-width="1.1"/></svg><span class="t" style="left:85px;transform:scaleX(0.8574)">Tasks</span></div><div class="row" style="top:200px"><svg class="abs" style="left:66px;top:5.5px;" width="8" height="9" viewBox="0 0 8 9"><path d="M0.6 0.4L6.9 4.2L0.6 8Z" fill="#111"/></svg><svg class="abs" style="left:82px;top:5px;" width="16" height="11" viewBox="0 0 16 11"><rect x="0.5" y="0.8" width="15" height="9" rx="2" fill="#fff" stroke="#8c8c8c" stroke-width="1"/><path d="M4.6 0.3H13.6A2.2 2.2 0 0 1 16 2.5V8.1A2.2 2.2 0 0 1 13.6 10.3H4.6Z" fill="#666"/><path d="M7.2 2.9H13M10.1 2.9V8.7" stroke="#fff" stroke-width="1.9" fill="none"/></svg><span class="t" style="left:105px;transform:scaleX(0.9049)">Core0_isrTask</span></div><div class="row g" style="top:220px"><svg class="abs" style="left:66px;top:5.5px;" width="8" height="9" viewBox="0 0 8 9"><path d="M0.6 0.4L6.9 4.2L0.6 8Z" fill="#111"/></svg><svg class="abs" style="left:82px;top:5px;" width="16" height="11" viewBox="0 0 16 11"><rect x="0.5" y="0.8" width="15" height="9" rx="2" fill="#fff" stroke="#8c8c8c" stroke-width="1"/><path d="M4.6 0.3H13.6A2.2 2.2 0 0 1 16 2.5V8.1A2.2 2.2 0 0 1 13.6 10.3H4.6Z" fill="#666"/><path d="M7.2 2.9H13M10.1 2.9V8.7" stroke="#fff" stroke-width="1.9" fill="none"/></svg><span class="t" style="left:105px;transform:scaleX(0.9271)">Core0_InitTask</span></div><div class="row" style="top:240px"><svg class="abs" style="left:66px;top:5.5px;" width="8" height="9" viewBox="0 0 8 9"><path d="M0.6 0.4L6.9 4.2L0.6 8Z" fill="#111"/></svg><svg class="abs" style="left:82px;top:5px;" width="16" height="11" viewBox="0 0 16 11"><rect x="0.5" y="0.8" width="15" height="9" rx="2" fill="#fff" stroke="#8c8c8c" stroke-width="1"/><path d="M4.6 0.3H13.6A2.2 2.2 0 0 1 16 2.5V8.1A2.2 2.2 0 0 1 13.6 10.3H4.6Z" fill="#666"/><path d="M7.2 2.9H13M10.1 2.9V8.7" stroke="#fff" stroke-width="1.9" fill="none"/></svg><span class="t" style="left:105px;transform:scaleX(0.9146)">Core0_1msTask</span></div><div class="row g" style="top:260px"><svg class="abs" style="left:66px;top:5.5px;" width="8" height="9" viewBox="0 0 8 9"><path d="M0.6 0.4L6.9 4.2L0.6 8Z" fill="#111"/></svg><svg class="abs" style="left:82px;top:5px;" width="16" height="11" viewBox="0 0 16 11"><rect x="0.5" y="0.8" width="15" height="9" rx="2" fill="#fff" stroke="#8c8c8c" stroke-width="1"/><path d="M4.6 0.3H13.6A2.2 2.2 0 0 1 16 2.5V8.1A2.2 2.2 0 0 1 13.6 10.3H4.6Z" fill="#666"/><path d="M7.2 2.9H13M10.1 2.9V8.7" stroke="#fff" stroke-width="1.9" fill="none"/></svg><span class="t" style="left:105px;transform:scaleX(0.9146)">Core0_10msTask</span></div><div class="row" style="top:280px"><svg class="abs" style="left:66px;top:5.5px;" width="8" height="9" viewBox="0 0 8 9"><path d="M0.6 0.4L6.9 4.2L0.6 8Z" fill="#111"/></svg><svg class="abs" style="left:82px;top:5px;" width="16" height="11" viewBox="0 0 16 11"><rect x="0.5" y="0.8" width="15" height="9" rx="2" fill="#fff" stroke="#8c8c8c" stroke-width="1"/><path d="M4.6 0.3H13.6A2.2 2.2 0 0 1 16 2.5V8.1A2.2 2.2 0 0 1 13.6 10.3H4.6Z" fill="#666"/><path d="M7.2 2.9H13M10.1 2.9V8.7" stroke="#fff" stroke-width="1.9" fill="none"/></svg><span class="t" style="left:105px;transform:scaleX(0.9146)">Core0_25msTask</span></div><div class="row g" style="top:300px"><svg class="abs" style="left:66px;top:5.5px;" width="8" height="9" viewBox="0 0 8 9"><path d="M0.6 0.4L6.9 4.2L0.6 8Z" fill="#111"/></svg><svg class="abs" style="left:82px;top:5px;" width="16" height="11" viewBox="0 0 16 11"><rect x="0.5" y="0.8" width="15" height="9" rx="2" fill="#fff" stroke="#8c8c8c" stroke-width="1"/><path d="M4.6 0.3H13.6A2.2 2.2 0 0 1 16 2.5V8.1A2.2 2.2 0 0 1 13.6 10.3H4.6Z" fill="#666"/><path d="M7.2 2.9H13M10.1 2.9V8.7" stroke="#fff" stroke-width="1.9" fill="none"/></svg><span class="t" style="left:105px;transform:scaleX(0.8853)">Core0_FakeTask</span></div><div class="row" style="top:320px"><svg class="abs" style="left:66px;top:5.5px;" width="8" height="9" viewBox="0 0 8 9"><path d="M0.6 0.4L6.9 4.2L0.6 8Z" fill="#111"/></svg><svg class="abs" style="left:82px;top:5px;" width="16" height="11" viewBox="0 0 16 11"><rect x="0.5" y="0.8" width="15" height="9" rx="2" fill="#fff" stroke="#8c8c8c" stroke-width="1"/><path d="M4.6 0.3H13.6A2.2 2.2 0 0 1 16 2.5V8.1A2.2 2.2 0 0 1 13.6 10.3H4.6Z" fill="#666"/><path d="M7.2 2.9H13M10.1 2.9V8.7" stroke="#fff" stroke-width="1.9" fill="none"/></svg><span class="t" style="left:105px;transform:scaleX(0.9146)">Core0_50msTask</span></div><div class="row g" style="top:340px"><svg class="abs" style="left:65px;top:5px;" width="8" height="8" viewBox="0 0 8 8"><path d="M7.6 0.5V7.6H0.5Z" fill="#111"/></svg><svg class="abs" style="left:82px;top:5px;" width="16" height="11" viewBox="0 0 16 11"><rect x="0.5" y="0.8" width="15" height="9" rx="2" fill="#fff" stroke="#8c8c8c" stroke-width="1"/><path d="M4.6 0.3H13.6A2.2 2.2 0 0 1 16 2.5V8.1A2.2 2.2 0 0 1 13.6 10.3H4.6Z" fill="#666"/><path d="M7.2 2.9H13M10.1 2.9V8.7" stroke="#fff" stroke-width="1.9" fill="none"/></svg><span class="t" style="left:105px;transform:scaleX(0.9354)">Core0_variableTask</span></div><div class="row" style="top:360px"><svg class="abs" style="left:103px;top:1.5px;" width="14" height="17" viewBox="0 0 14 17"><path d="M4 0.8H10L10.8 3.4H3.2Z" fill="#6f6f6f"/><path d="M4 16.2H10L10.8 13.6H3.2Z" fill="#6f6f6f"/><rect x="1.7" y="3" width="10.6" height="11" rx="2.6" fill="#fff" stroke="#6f6f6f" stroke-width="1.4"/><path d="M6.6 5.8V8.6L8.6 10.4" fill="none" stroke="#6f6f6f" stroke-width="1.2"/></svg><span class="t" style="left:125px;transform:scaleX(0.9717)">T1.cont - system wide</span></div><div class="row g" style="top:380px"><svg class="abs" style="left:86px;top:5.5px;" width="8" height="9" viewBox="0 0 8 9"><path d="M0.6 0.4L6.9 4.2L0.6 8Z" fill="#111"/></svg><svg class="abs" style="left:103px;top:1.5px;" width="14" height="17" viewBox="0 0 14 17"><path d="M4 0.8H10L10.8 3.4H3.2Z" fill="#6f6f6f"/><path d="M4 16.2H10L10.8 13.6H3.2Z" fill="#6f6f6f"/><rect x="1.7" y="3" width="10.6" height="11" rx="2.6" fill="#fff" stroke="#6f6f6f" stroke-width="1.4"/><path d="M6.6 5.8V8.6L8.6 10.4" fill="none" stroke="#6f6f6f" stroke-width="1.2"/></svg><span class="t" style="left:125px;transform:scaleX(0.9632)">T1.scope - system wide</span></div><div class="row rsel" style="top:400px"><svg class="abs" style="left:85px;top:5px;" width="8" height="8" viewBox="0 0 8 8"><path d="M7.6 0.5V7.6H0.5Z" fill="#111"/></svg><svg class="abs" style="left:102px;top:5.5px;" width="16" height="11" viewBox="0 0 16 11"><rect x="0" y="0.2" width="16" height="10" rx="2.2" fill="#666"/><path d="M5.6 8.6V2.4H8.6A1.8 1.8 0 0 1 8.6 6H5.6M8 6L10.6 8.6" stroke="#cfcc8a" stroke-width="1.5" fill="none"/></svg><span class="t" style="left:125px;transform:scaleX(0.9539)">Core0_variableRunnable0</span></div><div class="row g" style="top:420px"><svg class="abs" style="left:106px;top:5.5px;" width="8" height="9" viewBox="0 0 8 9"><path d="M0.6 0.4L6.9 4.2L0.6 8Z" fill="#111"/></svg><svg class="abs" style="left:122px;top:1px;" width="17" height="18" viewBox="0 0 17 18"><g fill="none" stroke="#6f6f6f" stroke-linecap="round"><path d="M6.8 3.8C5.8 2.8 4.7 3.2 4.5 4.6L3.1 13.2C2.9 14.6 2.1 15.2 1 14.8" stroke-width="1.15"/><path d="M2 7.6H6.2" stroke-width="1.1"/><path d="M8.5 6.6C6.9 9 6.9 13 8.5 15.4M14.7 6.6C16.3 9 16.3 13 14.7 15.4" stroke-width="1.05"/><path d="M10.1 9.5L13.1 12.5M13.1 9.5L10.1 12.5" stroke-width="1.2"/></g></svg><span class="t" style="left:145px;transform:scaleX(0.9334)">T1_DelayRoutinePC</span></div><div class="row" style="top:440px"><svg class="abs" style="left:105px;top:5px;" width="8" height="8" viewBox="0 0 8 8"><path d="M7.6 0.5V7.6H0.5Z" fill="#111"/></svg><svg class="abs" style="left:122px;top:1px;" width="17" height="18" viewBox="0 0 17 18"><g fill="none" stroke="#6f6f6f" stroke-linecap="round"><path d="M6.8 3.8C5.8 2.8 4.7 3.2 4.5 4.6L3.1 13.2C2.9 14.6 2.1 15.2 1 14.8" stroke-width="1.15"/><path d="M2 7.6H6.2" stroke-width="1.1"/><path d="M8.5 6.6C6.9 9 6.9 13 8.5 15.4M14.7 6.6C16.3 9 16.3 13 14.7 15.4" stroke-width="1.05"/><path d="M10.1 9.5L13.1 12.5M13.1 9.5L10.1 12.5" stroke-width="1.2"/></g></svg><span class="t" style="left:145px;transform:scaleX(0.9168)">TA_LED_Toggle</span></div><div class="row g" style="top:460px"><svg class="abs" style="left:142px;top:1px;" width="17" height="18" viewBox="0 0 17 18"><g fill="none" stroke="#6f6f6f" stroke-linecap="round"><path d="M6.8 3.8C5.8 2.8 4.7 3.2 4.5 4.6L3.1 13.2C2.9 14.6 2.1 15.2 1 14.8" stroke-width="1.15"/><path d="M2 7.6H6.2" stroke-width="1.1"/><path d="M8.5 6.6C6.9 9 6.9 13 8.5 15.4M14.7 6.6C16.3 9 16.3 13 14.7 15.4" stroke-width="1.05"/><path d="M10.1 9.5L13.1 12.5M13.1 9.5L10.1 12.5" stroke-width="1.2"/></g></svg><span class="t" style="left:165px;transform:scaleX(0.9143)">LEDCTL_Toggle</span></div><div class="row" style="top:480px"><svg class="abs" style="left:66px;top:5.5px;" width="8" height="9" viewBox="0 0 8 9"><path d="M0.6 0.4L6.9 4.2L0.6 8Z" fill="#111"/></svg><svg class="abs" style="left:82px;top:5px;" width="16" height="11" viewBox="0 0 16 11"><rect x="0.5" y="0.8" width="15" height="9" rx="2" fill="#fff" stroke="#8c8c8c" stroke-width="1"/><path d="M4.6 0.3H13.6A2.2 2.2 0 0 1 16 2.5V8.1A2.2 2.2 0 0 1 13.6 10.3H4.6Z" fill="#666"/><path d="M7.2 2.9H13M10.1 2.9V8.7" stroke="#fff" stroke-width="1.9" fill="none"/></svg><span class="t" style="left:105px;transform:scaleX(0.8833)">Core0_FakeTaskCET200us</span></div><div class="row g" style="top:500px"><svg class="abs" style="left:66px;top:5.5px;" width="8" height="9" viewBox="0 0 8 9"><path d="M0.6 0.4L6.9 4.2L0.6 8Z" fill="#111"/></svg><svg class="abs" style="left:82px;top:5px;" width="16" height="11" viewBox="0 0 16 11"><rect x="0.5" y="0.8" width="15" height="9" rx="2" fill="#fff" stroke="#8c8c8c" stroke-width="1"/><path d="M4.6 0.3H13.6A2.2 2.2 0 0 1 16 2.5V8.1A2.2 2.2 0 0 1 13.6 10.3H4.6Z" fill="#666"/><path d="M7.2 2.9H13M10.1 2.9V8.7" stroke="#fff" stroke-width="1.9" fill="none"/></svg><span class="t" style="left:105px;transform:scaleX(0.9116)">Core0_500msTask</span></div><div class="row" style="top:520px"><svg class="abs" style="left:66px;top:5.5px;" width="8" height="9" viewBox="0 0 8 9"><path d="M0.6 0.4L6.9 4.2L0.6 8Z" fill="#111"/></svg><svg class="abs" style="left:82px;top:5px;" width="16" height="11" viewBox="0 0 16 11"><rect x="0.5" y="0.8" width="15" height="9" rx="2" fill="#fff" stroke="#8c8c8c" stroke-width="1"/><path d="M4.6 0.3H13.6A2.2 2.2 0 0 1 16 2.5V8.1A2.2 2.2 0 0 1 13.6 10.3H4.6Z" fill="#666"/><path d="M7.2 2.9H13M10.1 2.9V8.7" stroke="#fff" stroke-width="1.9" fill="none"/></svg><span class="t" style="left:105px;transform:scaleX(0.9393)">Core0_BackgroundTask</span></div><div class="row g" style="top:540px"><svg class="abs" style="left:46px;top:5.5px;" width="8" height="9" viewBox="0 0 8 9"><path d="M0.6 0.4L6.9 4.2L0.6 8Z" fill="#111"/></svg><svg class="abs" style="left:62px;top:2.5px;" width="16" height="15" viewBox="0 0 16 15"><path d="M1 3A1.6 1.6 0 0 1 2.6 1.2H6.2L8.2 3.4H13.6A1.6 1.6 0 0 1 15.2 5V12.2A1.6 1.6 0 0 1 13.6 13.8H2.6A1.6 1.6 0 0 1 1 12.2Z" fill="#fff" stroke="#6f6f6f" stroke-width="1.1"/></svg><span class="t" style="left:85px;transform:scaleX(0.9606)">Stopwatches</span></div><div class="row" style="top:560px"><svg class="abs" style="left:62px;top:2.5px;" width="16" height="15" viewBox="0 0 16 15"><path d="M1 3A1.6 1.6 0 0 1 2.6 1.2H6.2L8.2 3.4H13.6A1.6 1.6 0 0 1 15.2 5V12.2A1.6 1.6 0 0 1 13.6 13.8H2.6A1.6 1.6 0 0 1 1 12.2Z" fill="#fff" stroke="#6f6f6f" stroke-width="1.1"/></svg><span class="t" style="left:85px;transform:scaleX(0.9550)">Simple Stopwatches</span></div><div class="row g" style="top:580px"><svg class="abs" style="left:46px;top:5.5px;" width="8" height="9" viewBox="0 0 8 9"><path d="M0.6 0.4L6.9 4.2L0.6 8Z" fill="#111"/></svg><svg class="abs" style="left:62px;top:2.5px;" width="16" height="15" viewBox="0 0 16 15"><path d="M1 3A1.6 1.6 0 0 1 2.6 1.2H6.2L8.2 3.4H13.6A1.6 1.6 0 0 1 15.2 5V12.2A1.6 1.6 0 0 1 13.6 13.8H2.6A1.6 1.6 0 0 1 1 12.2Z" fill="#fff" stroke="#6f6f6f" stroke-width="1.1"/></svg><span class="t" style="left:85px;transform:scaleX(0.9550)">User Events</span></div><div class="row" style="top:600px"><svg class="abs" style="left:46px;top:5.5px;" width="8" height="9" viewBox="0 0 8 9"><path d="M0.6 0.4L6.9 4.2L0.6 8Z" fill="#111"/></svg><svg class="abs" style="left:62px;top:2.5px;" width="16" height="15" viewBox="0 0 16 15"><path d="M1 3A1.6 1.6 0 0 1 2.6 1.2H6.2L8.2 3.4H13.6A1.6 1.6 0 0 1 15.2 5V12.2A1.6 1.6 0 0 1 13.6 13.8H2.6A1.6 1.6 0 0 1 1 12.2Z" fill="#fff" stroke="#6f6f6f" stroke-width="1.1"/></svg><span class="t" style="left:85px;transform:scaleX(0.9550)">Symbol Groups</span></div><div class="row g" style="top:620px"><svg class="abs" style="left:25px;top:5px;" width="8" height="8" viewBox="0 0 8 8"><path d="M7.6 0.5V7.6H0.5Z" fill="#111"/></svg><svg class="abs" style="left:42px;top:2px;" width="16" height="16" viewBox="0 0 16 16"><g fill="none" stroke="#6f6f6f" stroke-width="1.1"><rect x="3" y="3" width="10" height="10" rx="1.6" stroke-width="1.4"/><rect x="6" y="6" width="4" height="4" stroke-width="1.3"/><path d="M5 0.5V3M5 13V15.5M0.5 5H3M13 5H15.5"/><path d="M8 0.5V3M8 13V15.5M0.5 8H3M13 8H15.5"/><path d="M11 0.5V3M11 13V15.5M0.5 11H3M13 11H15.5"/></g></svg><span class="t" style="left:65px;transform:scaleX(0.9057)">Core1</span></div><div class="row" style="top:640px"><svg class="abs" style="left:63px;top:1.5px;" width="14" height="17" viewBox="0 0 14 17"><path d="M4 0.8H10L10.8 3.4H3.2Z" fill="#6f6f6f"/><path d="M4 16.2H10L10.8 13.6H3.2Z" fill="#6f6f6f"/><rect x="1.7" y="3" width="10.6" height="11" rx="2.6" fill="#fff" stroke="#6f6f6f" stroke-width="1.4"/><path d="M6.6 5.8V8.6L8.6 10.4" fill="none" stroke="#6f6f6f" stroke-width="1.2"/></svg><span class="t" style="left:85px;transform:scaleX(0.9717)">T1.cont - system wide</span></div><div class="row g" style="top:660px"><svg class="abs" style="left:46px;top:5.5px;" width="8" height="9" viewBox="0 0 8 9"><path d="M0.6 0.4L6.9 4.2L0.6 8Z" fill="#111"/></svg><svg class="abs" style="left:63px;top:1.5px;" width="14" height="17" viewBox="0 0 14 17"><path d="M4 0.8H10L10.8 3.4H3.2Z" fill="#6f6f6f"/><path d="M4 16.2H10L10.8 13.6H3.2Z" fill="#6f6f6f"/><rect x="1.7" y="3" width="10.6" height="11" rx="2.6" fill="#fff" stroke="#6f6f6f" stroke-width="1.4"/><path d="M6.6 5.8V8.6L8.6 10.4" fill="none" stroke="#6f6f6f" stroke-width="1.2"/></svg><span class="t" style="left:85px;transform:scaleX(0.9632)">T1.scope - system wide</span></div><div class="row" style="top:680px"><svg class="abs" style="left:46px;top:5.5px;" width="8" height="9" viewBox="0 0 8 9"><path d="M0.6 0.4L6.9 4.2L0.6 8Z" fill="#111"/></svg><svg class="abs" style="left:62px;top:2.5px;" width="16" height="15" viewBox="0 0 16 15"><path d="M1 3A1.6 1.6 0 0 1 2.6 1.2H6.2L8.2 3.4H13.6A1.6 1.6 0 0 1 15.2 5V12.2A1.6 1.6 0 0 1 13.6 13.8H2.6A1.6 1.6 0 0 1 1 12.2Z" fill="#fff" stroke="#6f6f6f" stroke-width="1.1"/></svg><span class="t" style="left:85px;transform:scaleX(0.9864)">Application Features</span></div><div class="row g" style="top:700px"><svg class="abs" style="left:46px;top:5.5px;" width="8" height="9" viewBox="0 0 8 9"><path d="M0.6 0.4L6.9 4.2L0.6 8Z" fill="#111"/></svg><svg class="abs" style="left:62px;top:2.5px;" width="16" height="15" viewBox="0 0 16 15"><path d="M1 3A1.6 1.6 0 0 1 2.6 1.2H6.2L8.2 3.4H13.6A1.6 1.6 0 0 1 15.2 5V12.2A1.6 1.6 0 0 1 13.6 13.8H2.6A1.6 1.6 0 0 1 1 12.2Z" fill="#fff" stroke="#6f6f6f" stroke-width="1.1"/></svg><span class="t" style="left:85px;transform:scaleX(0.9270)">Delays</span></div><div class="row" style="top:720px"><svg class="abs" style="left:45px;top:5px;" width="8" height="8" viewBox="0 0 8 8"><path d="M7.6 0.5V7.6H0.5Z" fill="#111"/></svg><svg class="abs" style="left:62px;top:2.5px;" width="16" height="15" viewBox="0 0 16 15"><path d="M1 3A1.6 1.6 0 0 1 2.6 1.2H6.2L8.2 3.4H13.6A1.6 1.6 0 0 1 15.2 5V12.2A1.6 1.6 0 0 1 13.6 13.8H2.6A1.6 1.6 0 0 1 1 12.2Z" fill="#fff" stroke="#6f6f6f" stroke-width="1.1"/></svg><span class="t" style="left:85px;transform:scaleX(0.9864)">Interrupts</span></div><div class="row g" style="top:740px"><svg class="abs" style="left:66px;top:5.5px;" width="8" height="9" viewBox="0 0 8 9"><path d="M0.6 0.4L6.9 4.2L0.6 8Z" fill="#111"/></svg><svg class="abs" style="left:83px;top:2px;" width="14" height="17" viewBox="0 0 14 17"><path d="M4.2 1H10L8 6.2H12.6L5.6 15.8L7.2 9.2H2.6Z" fill="#fff" fill-opacity="0.4" stroke="#6f6f6f" stroke-width="1" stroke-linejoin="round"/></svg><span class="t" style="left:105px;transform:scaleX(0.9035)">OS_TimerISRCore1</span></div><div class="row" style="top:760px"><svg class="abs" style="left:66px;top:5.5px;" width="8" height="9" viewBox="0 0 8 9"><path d="M0.6 0.4L6.9 4.2L0.6 8Z" fill="#111"/></svg><svg class="abs" style="left:83px;top:2px;" width="14" height="17" viewBox="0 0 14 17"><path d="M4.2 1H10L8 6.2H12.6L5.6 15.8L7.2 9.2H2.6Z" fill="#fff" fill-opacity="0.4" stroke="#6f6f6f" stroke-width="1" stroke-linejoin="round"/></svg><span class="t" style="left:105px;transform:scaleX(0.8915)">ISR_tft_qspi_Rx</span></div><div class="row g" style="top:780px"><svg class="abs" style="left:66px;top:5.5px;" width="8" height="9" viewBox="0 0 8 9"><path d="M0.6 0.4L6.9 4.2L0.6 8Z" fill="#111"/></svg><svg class="abs" style="left:83px;top:2px;" width="14" height="17" viewBox="0 0 14 17"><path d="M4.2 1H10L8 6.2H12.6L5.6 15.8L7.2 9.2H2.6Z" fill="#fff" fill-opacity="0.4" stroke="#6f6f6f" stroke-width="1" stroke-linejoin="round"/></svg><span class="t" style="left:105px;transform:scaleX(0.8820)">ISR_tft_qspi_Tx</span></div><div class="row" style="top:800px"><svg class="abs" style="left:66px;top:5.5px;" width="8" height="9" viewBox="0 0 8 9"><path d="M0.6 0.4L6.9 4.2L0.6 8Z" fill="#111"/></svg><svg class="abs" style="left:83px;top:2px;" width="14" height="17" viewBox="0 0 14 17"><path d="M4.2 1H10L8 6.2H12.6L5.6 15.8L7.2 9.2H2.6Z" fill="#fff" fill-opacity="0.4" stroke="#6f6f6f" stroke-width="1" stroke-linejoin="round"/></svg><span class="t" style="left:105px;transform:scaleX(0.9100)">ISR_rtc_cal_measure_fin</span></div><div class="row g" style="top:820px"><svg class="abs" style="left:66px;top:5.5px;" width="8" height="9" viewBox="0 0 8 9"><path d="M0.6 0.4L6.9 4.2L0.6 8Z" fill="#111"/></svg><svg class="abs" style="left:83px;top:2px;" width="14" height="17" viewBox="0 0 14 17"><path d="M4.2 1H10L8 6.2H12.6L5.6 15.8L7.2 9.2H2.6Z" fill="#fff" fill-opacity="0.4" stroke="#6f6f6f" stroke-width="1" stroke-linejoin="round"/></svg><span class="t" style="left:105px;transform:scaleX(0.8960)">ISR_tft_qspi_Er</span></div><div class="row" style="top:840px"><svg class="abs" style="left:45px;top:5px;" width="8" height="8" viewBox="0 0 8 8"><path d="M7.6 0.5V7.6H0.5Z" fill="#111"/></svg><svg class="abs" style="left:62px;top:2.5px;" width="16" height="15" viewBox="0 0 16 15"><path d="M1 3A1.6 1.6 0 0 1 2.6 1.2H6.2L8.2 3.4H13.6A1.6 1.6 0 0 1 15.2 5V12.2A1.6 1.6 0 0 1 13.6 13.8H2.6A1.6 1.6 0 0 1 1 12.2Z" fill="#fff" stroke="#6f6f6f" stroke-width="1.1"/></svg><span class="t" style="left:85px;transform:scaleX(0.8509)">Tasks</span></div><div class="row g" style="top:860px"><svg class="abs" style="left:66px;top:5.5px;" width="8" height="9" viewBox="0 0 8 9"><path d="M0.6 0.4L6.9 4.2L0.6 8Z" fill="#111"/></svg><svg class="abs" style="left:82px;top:5px;" width="16" height="11" viewBox="0 0 16 11"><rect x="0.5" y="0.8" width="15" height="9" rx="2" fill="#fff" stroke="#8c8c8c" stroke-width="1"/><path d="M4.6 0.3H13.6A2.2 2.2 0 0 1 16 2.5V8.1A2.2 2.2 0 0 1 13.6 10.3H4.6Z" fill="#666"/><path d="M7.2 2.9H13M10.1 2.9V8.7" stroke="#fff" stroke-width="1.9" fill="none"/></svg><span class="t" style="left:105px;transform:scaleX(0.9246)">Core1_InitTask</span></div><div class="row" style="top:880px"><svg class="abs" style="left:66px;top:5.5px;" width="8" height="9" viewBox="0 0 8 9"><path d="M0.6 0.4L6.9 4.2L0.6 8Z" fill="#111"/></svg><svg class="abs" style="left:82px;top:5px;" width="16" height="11" viewBox="0 0 16 11"><rect x="0.5" y="0.8" width="15" height="9" rx="2" fill="#fff" stroke="#8c8c8c" stroke-width="1"/><path d="M4.6 0.3H13.6A2.2 2.2 0 0 1 16 2.5V8.1A2.2 2.2 0 0 1 13.6 10.3H4.6Z" fill="#666"/><path d="M7.2 2.9H13M10.1 2.9V8.7" stroke="#fff" stroke-width="1.9" fill="none"/></svg><span class="t" style="left:105px;transform:scaleX(0.9112)">Core1_2msTask</span></div><div class="row g" style="top:900px"><svg class="abs" style="left:66px;top:5.5px;" width="8" height="9" viewBox="0 0 8 9"><path d="M0.6 0.4L6.9 4.2L0.6 8Z" fill="#111"/></svg><svg class="abs" style="left:82px;top:5px;" width="16" height="11" viewBox="0 0 16 11"><rect x="0.5" y="0.8" width="15" height="9" rx="2" fill="#fff" stroke="#8c8c8c" stroke-width="1"/><path d="M4.6 0.3H13.6A2.2 2.2 0 0 1 16 2.5V8.1A2.2 2.2 0 0 1 13.6 10.3H4.6Z" fill="#666"/><path d="M7.2 2.9H13M10.1 2.9V8.7" stroke="#fff" stroke-width="1.9" fill="none"/></svg><span class="t" style="left:105px;transform:scaleX(0.9114)">Core1_10msTask</span></div><div class="abs" style="left:0;top:19px;width:383px;height:1px;background:#c9dc1e"></div><div class="abs" style="left:0;top:39px;width:383px;height:1px;background:#c9dc1e"></div><div class="abs" style="left:0;top:619px;width:383px;height:1px;background:#c9dc1e"></div></div>
<div class="abs" style="left:1299px;top:215px;width:1px;height:937px;background:#cfcfcf"></div>
<div class="abs" style="left:1300px;top:215px;width:17px;height:921px;background:#f4f4f4"></div>
<div class="abs" style="left:1299px;top:615px;width:3px;height:20px;background:#c5c27c"></div>
<div class="abs" style="left:918px;top:1135px;width:382px;height:1px;background:#9c9c9c"></div>
<div class="abs" style="left:1307px;top:232px;width:3px;height:450px;background:#7f7f7f;border-radius:1.5px"></div>
<div class="co" style="left:361px;top:315px;width:363px;height:107px;line-height:37.6px;padding-top:16.2px"><span style="display:inline-block;position:relative;left:-1.6px;transform:scaleX(0.997)">IMPLEMENTATION</span><br><span style="display:inline-block;position:relative;left:4.3px;transform:scaleX(0.996)">OF FUNCTION</span></div>
<div class="co" style="left:483px;top:941px;width:338px;height:134px;line-height:38.5px;padding-top:10.1px"><span style="display:inline-block;position:relative;left:1px;transform:scaleX(0.954)">CONTEXT</span><br><span style="display:inline-block;position:relative;left:2px;transform:scaleX(0.962)">WHERE FUNCTION</span><br><span style="display:inline-block;position:relative;left:3.7px;transform:scaleX(0.936)">IS CALLED</span></div>
<div class="co" style="left:1028px;top:776px;width:225px;height:67px;line-height:38px;padding-top:14.6px"><span style="display:inline-block;position:relative;left:-1.4px;transform:scaleX(0.905)">CALL TREE</span></div>
</div></body></html>
